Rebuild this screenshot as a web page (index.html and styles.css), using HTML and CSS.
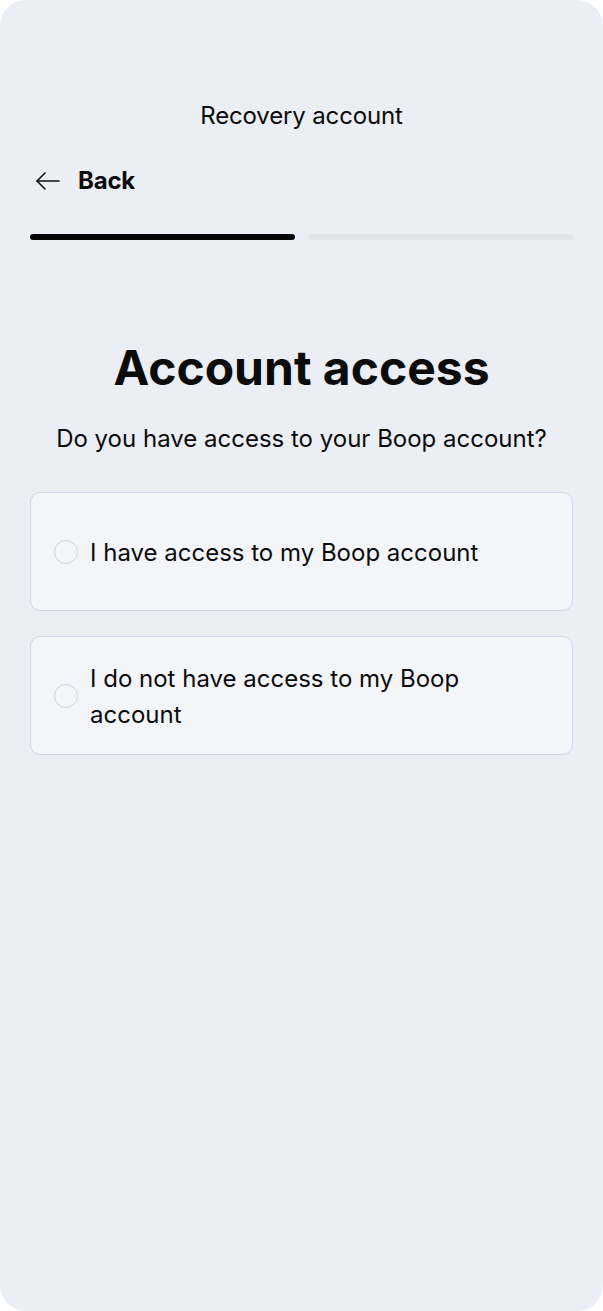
FILE: index.html
```html
<!DOCTYPE html>
<html lang="en">
<head>
<meta charset="utf-8">
<title>Recovery account</title>
<link rel="stylesheet" href="styles.css">
</head>
<body>
<div class="screen">
  <header class="topbar">
    <div class="title">Recovery account</div>
  </header>
  <nav class="backrow">
    <svg class="arrow" width="26" height="20" viewBox="0 0 26 20" fill="none" stroke="#111" stroke-width="1.6" stroke-linecap="round" stroke-linejoin="round">
      <path d="M24 10H2"/>
      <path d="M10 2L2 10l8 8"/>
    </svg>
    <span class="back">Back</span>
  </nav>
  <div class="progress">
    <div class="seg active"></div>
    <div class="seg"></div>
  </div>
  <main class="content">
    <h1 class="heading">Account access</h1>
    <p class="sub">Do you have access to your Boop account?</p>
    <div class="options">
      <label class="option">
        <span class="radio"></span>
        <span class="label">I have access to my Boop account</span>
      </label>
      <label class="option">
        <span class="radio"></span>
        <span class="label">I do not have access to my Boop account</span>
      </label>
    </div>
  </main>
</div>
</body>
</html>
```

FILE: styles.css
```css
html, body {
  margin: 0;
  padding: 0;
  background: #ffffff;
}
body {
  font-family: Inter, "Noto Sans", sans-serif;
  color: #0b0b0c;
}
.screen {
  width: 603px;
  height: 1311px;
  box-sizing: border-box;
  background: #ebeef5;
  border-radius: 26px;
  padding: 0 30px;
  display: flex;
  flex-direction: column;
}
.topbar {
  padding-top: 100px;
  display: flex;
  justify-content: center;
}
.title {
  font-size: 24px;
  line-height: 32px;
  font-weight: 400;
  letter-spacing: -0.15px;
}
.backrow {
  margin-top: 33px;
  display: flex;
  align-items: center;
  height: 32px;
  padding-left: 5px;
  gap: 17px;
}
.arrow {
  display: block;
}
.back {
  font-size: 24px;
  font-weight: 700;
  line-height: 32px;
  letter-spacing: -0.2px;
}
.progress {
  margin-top: 37px;
  display: flex;
  gap: 13px;
}
.seg {
  flex: 1;
  height: 6px;
  border-radius: 3px;
  background: #e3e4e8;
}
.seg.active {
  background: #050505;
}
.content {
  display: flex;
  flex-direction: column;
  align-items: stretch;
}
.heading {
  margin: 100px 0 0;
  text-align: center;
  font-size: 48px;
  line-height: 56px;
  font-weight: 700;
  letter-spacing: 0;
}
.sub {
  margin: 27px 0 0;
  text-align: center;
  font-size: 24px;
  line-height: 32px;
}
.options {
  margin-top: 37px;
  display: flex;
  flex-direction: column;
  gap: 25px;
}
.option {
  box-sizing: border-box;
  min-height: 119px;
  padding: 21px 24px 21px 23px;
  background: #f4f5f9;
  border: 1.5px solid #ccd6e4;
  border-radius: 10px;
  display: flex;
  align-items: center;
  gap: 12px;
}
.radio {
  flex: none;
  width: 22px;
  height: 22px;
  border: 1.5px solid #c9d3e1;
  border-radius: 50%;
  background: #f4f5f9;
}
.label {
  font-size: 24px;
  line-height: 36px;
  padding-top: 2px;
}
```
